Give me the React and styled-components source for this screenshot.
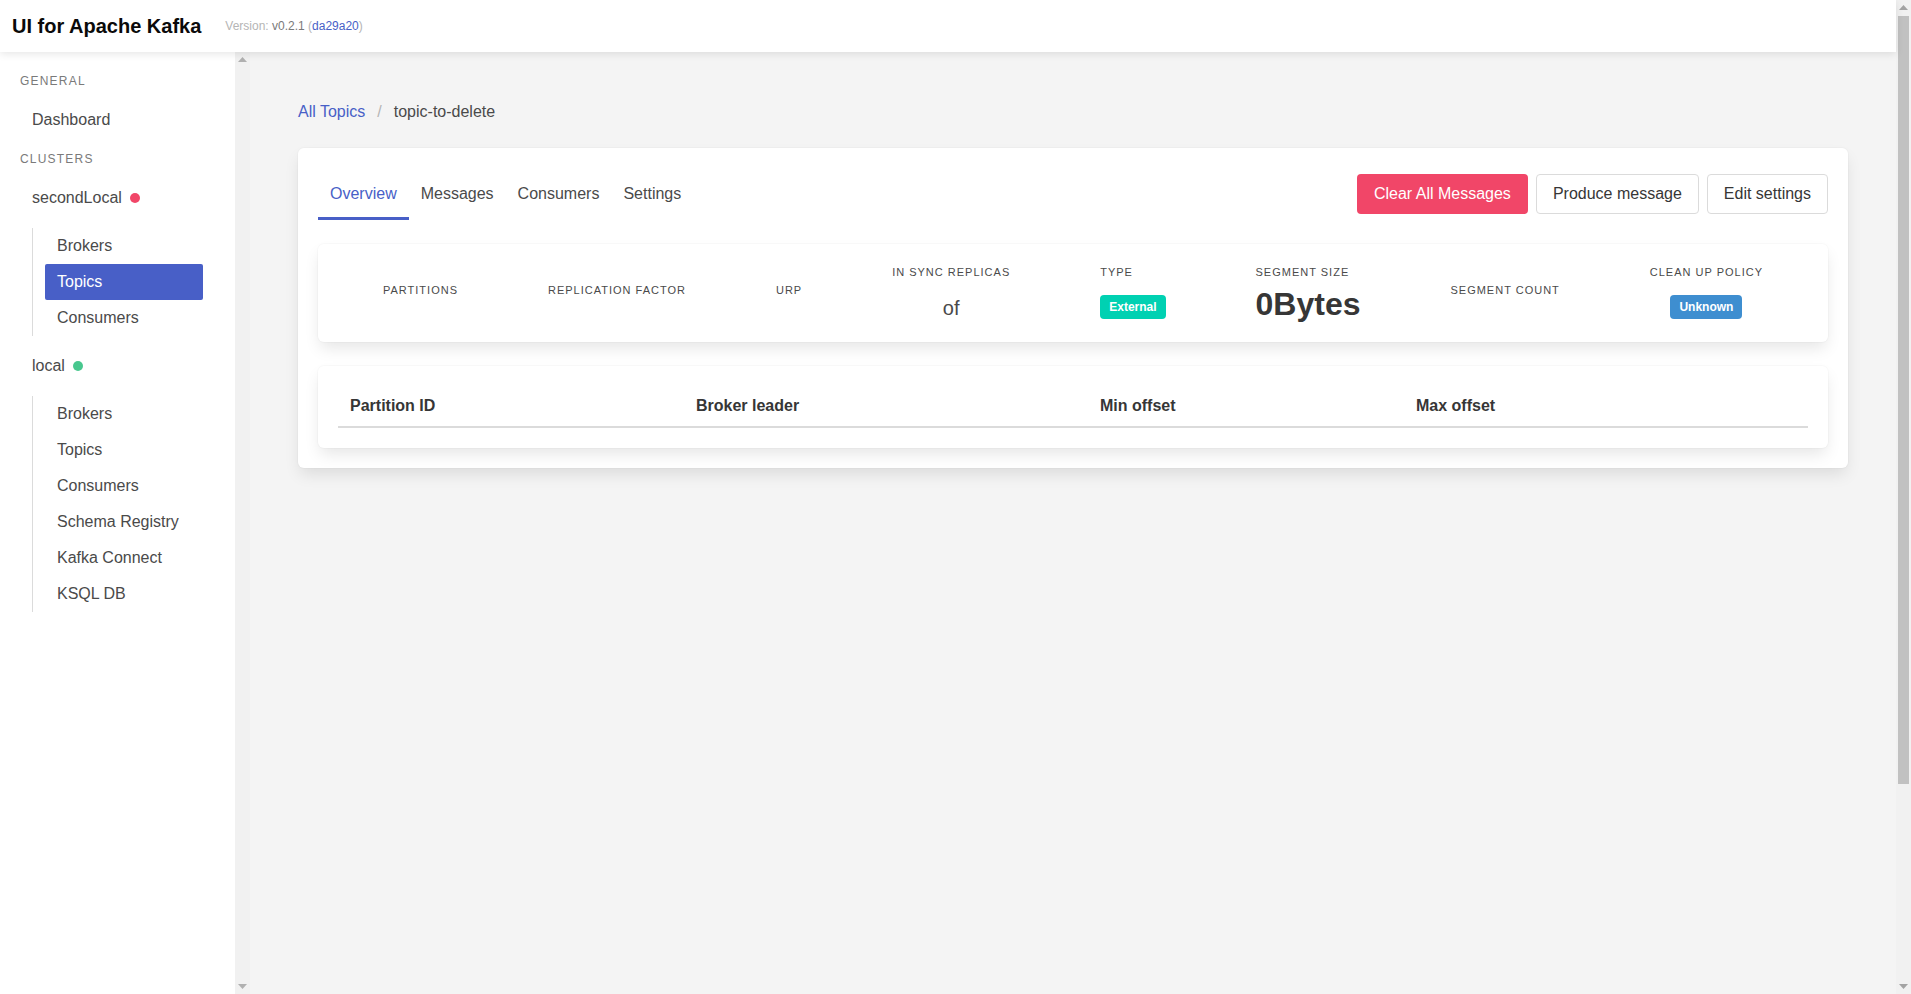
import React from "react";
import styled, { createGlobalStyle } from "styled-components";

const GlobalStyle = createGlobalStyle`
    * { box-sizing: border-box; }
    html, body { height: 100%; }
    body {
        margin: 0;
        overflow: hidden;
        font-family: "Liberation Sans", Arial, sans-serif;
        font-size: 16px;
        line-height: 1.5;
        color: #4a4a4a;
        background: #f4f4f4;
    }
    ul { list-style: none; margin: 0; padding: 0; }
    p { margin: 0; }
`;

const colors = {
    link: "#485fc7",
    danger: "#f14668",
    success: "#48c78e",
    primary: "#00d1b2",
    info: "#3e8ed0",
    text: "#4a4a4a",
    strong: "#363636",
    border: "#dbdbdb"
};

const Viewport = styled.div`
    display: flex;
    height: 100vh;
`;

const Page = styled.div`
    flex: 1;
    min-width: 0;
    display: flex;
    flex-direction: column;
`;

/* classic browser scrollbars, drawn since the page is a fixed frame */
const ScrollBar = styled.div`
    flex: none;
    width: 15px;
    display: flex;
    flex-direction: column;
    background: #f1f1f1;
`;

const ScrollArrow = styled.div`
    flex: none;
    height: 15px;
    display: flex;
    align-items: center;
    justify-content: center;
    margin-top: ${props => (props.down ? "auto" : "0")};
`;

const ScrollThumb = styled.div`
    flex: none;
    height: ${props => props.size}px;
    margin: 1px 2px 0;
    background: #c1c1c1;
`;

const Arrow = ({ down, color = "#a3a3a3" }) => (
    <ScrollArrow down={down}>
        <svg width="9" height="5" viewBox="0 0 9 5">
            <polygon
                points={down ? "0,0 9,0 4.5,5" : "0,5 9,5 4.5,0"}
                fill={color}
            />
        </svg>
    </ScrollArrow>
);

const Navbar = styled.nav`
    position: relative;
    z-index: 2;
    flex: none;
    height: 52px;
    display: flex;
    align-items: center;
    background: #fff;
    box-shadow: 0 2px 8px rgba(10, 10, 10, 0.1);
`;

const NavItem = styled.div`
    padding: 8px 12px;
    display: flex;
    align-items: center;
`;

const Brand = styled.span`
    font-size: 20px;
    font-weight: 700;
    color: #0a0a0a;
    line-height: 1.125;
`;

const Version = styled.span`
    font-size: 12px;
    color: #b5b5b5;

    b {
        font-weight: 400;
        color: #7a7a7a;
    }

    a {
        color: ${colors.link};
        text-decoration: none;
    }
`;

const Body = styled.div`
    flex: 1;
    min-height: 0;
    display: flex;
`;

const Sidebar = styled.aside`
    flex: none;
    width: 235px;
    background: #fff;
    padding: 20px;
`;

const MenuLabel = styled.p`
    font-size: 12px;
    letter-spacing: 0.1em;
    text-transform: uppercase;
    color: #7a7a7a;
    margin: ${props => (props.first ? "0 0 12px" : "12px 0")};
`;

const MenuLink = styled.a`
    display: flex;
    align-items: center;
    gap: 8px;
    padding: 8px 12px;
    line-height: 20px;
    border-radius: 2px;
    text-decoration: none;
    color: ${props => (props.active ? "#fff" : colors.text)};
    background: ${props => (props.active ? colors.link : "transparent")};
`;

const SubList = styled.ul`
    margin: 12px;
    padding-left: 12px;
    border-left: 1px solid ${colors.border};
`;

const StatusDot = styled.span`
    width: 10px;
    height: 10px;
    border-radius: 50%;
    background: ${props => (props.online ? colors.success : colors.danger)};
`;

const Main = styled.main`
    flex: 1;
    min-width: 0;
    padding: 48px;
    background: #f4f4f4;
`;

const Breadcrumb = styled.ul`
    display: flex;
    align-items: center;
    margin-bottom: 24px;
    line-height: 24px;

    li + li::before {
        content: "/";
        color: #b5b5b5;
    }

    a {
        color: ${colors.link};
        text-decoration: none;
        padding-right: 12px;
    }

    span {
        padding-left: 12px;
        color: ${colors.text};
    }
`;

const Box = styled.div`
    background: #fff;
    border-radius: 6px;
    padding: 20px;
    box-shadow: 0 8px 16px -2px rgba(10, 10, 10, 0.1),
        0 0 0 1px rgba(10, 10, 10, 0.02);
    margin-bottom: ${props => (props.last ? "0" : "24px")};
`;

const TopRow = styled.div`
    display: flex;
    align-items: center;
    justify-content: space-between;
    margin-bottom: 24px;
`;

const Tabs = styled.ul`
    display: flex;
`;

const Tab = styled.a`
    display: block;
    padding: 14px 12px 11px;
    line-height: 24px;
    text-decoration: none;
    color: ${props => (props.active ? colors.link : colors.text)};
    border-bottom: 3px solid
        ${props => (props.active ? colors.link : "transparent")};
`;

const Buttons = styled.div`
    display: flex;
    gap: 8px;
`;

const Button = styled.button`
    height: 40px;
    padding: 0 16px;
    font-family: inherit;
    font-size: 16px;
    line-height: 1.5;
    border-radius: 4px;
    cursor: pointer;
    border: 1px solid ${props => (props.danger ? "transparent" : colors.border)};
    background: ${props => (props.danger ? colors.danger : "#fff")};
    color: ${props => (props.danger ? "#fff" : colors.strong)};
`;

const Level = styled.div`
    display: flex;
    align-items: center;
    justify-content: space-between;
`;

const LevelItem = styled.div`
    flex: 1 0 auto;
    display: flex;
    justify-content: center;
    align-items: center;
`;

const Heading = styled.p`
    font-size: 11px;
    letter-spacing: 1px;
    text-transform: uppercase;
    margin-bottom: 5px;
`;

const Title = styled.p`
    font-size: 32px;
    font-weight: 700;
    line-height: 1.125;
    color: ${colors.strong};
    text-align: center;
`;

const Subtitle = styled.span`
    font-size: 20px;
    font-weight: 300;
    color: ${colors.text};
`;

const Tag = styled.span`
    display: inline-flex;
    align-items: center;
    height: 24px;
    padding: 0 9px;
    margin-top: 2px;
    font-size: 12px;
    line-height: 1.5;
    border-radius: 4px;
    vertical-align: middle;
    color: #fff;
    background: ${props => (props.info ? colors.info : colors.primary)};
`;

const Table = styled.table`
    width: 100%;
    border-collapse: collapse;

    th {
        text-align: left;
        padding: 8px 12px;
        color: ${colors.strong};
        font-weight: 700;
        border-bottom: 2px solid ${colors.border};
    }
`;

const Th = styled.th`
    width: ${props => props.w}px;
`;

const Indicator = ({ label, children }) => (
    <LevelItem>
        <div title={label}>
            <Heading>{label}</Heading>
            <Title>{children}</Title>
        </div>
    </LevelItem>
);

const secondLocalLinks = ["Brokers", "Topics", "Consumers"];
const localLinks = [
    "Brokers",
    "Topics",
    "Consumers",
    "Schema Registry",
    "Kafka Connect",
    "KSQL DB"
];

const columns = [
    { name: "Partition ID", w: 346 },
    { name: "Broker leader", w: 404 },
    { name: "Min offset", w: 316 },
    { name: "Max offset", w: 404 }
];

export default function App() {
    return (
        <Viewport>
            <GlobalStyle />
            <Page>
                <Navbar>
                    <NavItem>
                        <Brand>UI for Apache Kafka</Brand>
                    </NavItem>
                    <NavItem>
                        <Version>
                            Version: <b>v0.2.1</b> (<a href="#">da29a20</a>)
                        </Version>
                    </NavItem>
                </Navbar>

                <Body>
                    <Sidebar>
                        <MenuLabel first>General</MenuLabel>
                        <ul>
                            <li>
                                <MenuLink href="#">Dashboard</MenuLink>
                            </li>
                        </ul>
                        <MenuLabel>Clusters</MenuLabel>
                        <ul>
                            <li>
                                <MenuLink href="#">
                                    secondLocal <StatusDot />
                                </MenuLink>
                                <SubList>
                                    {secondLocalLinks.map(name => (
                                        <li key={name}>
                                            <MenuLink
                                                href="#"
                                                active={name === "Topics"}
                                            >
                                                {name}
                                            </MenuLink>
                                        </li>
                                    ))}
                                </SubList>
                            </li>
                            <li>
                                <MenuLink href="#">
                                    local <StatusDot online />
                                </MenuLink>
                                <SubList>
                                    {localLinks.map(name => (
                                        <li key={name}>
                                            <MenuLink href="#">{name}</MenuLink>
                                        </li>
                                    ))}
                                </SubList>
                            </li>
                        </ul>
                    </Sidebar>
                    <ScrollBar>
                        <Arrow color="#b0b0b0" />
                        <Arrow down color="#b0b0b0" />
                    </ScrollBar>

                    <Main>
                        <Breadcrumb>
                            <li>
                                <a href="#">All Topics</a>
                            </li>
                            <li>
                                <span>topic-to-delete</span>
                            </li>
                        </Breadcrumb>

                        <Box last>
                            <TopRow>
                                <Tabs>
                                    <li>
                                        <Tab href="#" active>
                                            Overview
                                        </Tab>
                                    </li>
                                    <li>
                                        <Tab href="#">Messages</Tab>
                                    </li>
                                    <li>
                                        <Tab href="#">Consumers</Tab>
                                    </li>
                                    <li>
                                        <Tab href="#">Settings</Tab>
                                    </li>
                                </Tabs>
                                <Buttons>
                                    <Button danger>Clear All Messages</Button>
                                    <Button>Produce message</Button>
                                    <Button>Edit settings</Button>
                                </Buttons>
                            </TopRow>

                            <Box>
                                <Level>
                                    <Indicator label="Partitions" />
                                    <Indicator label="Replication Factor" />
                                    <Indicator label="URP" />
                                    <Indicator label="In sync replicas">
                                        <Subtitle> of </Subtitle>
                                    </Indicator>
                                    <Indicator label="Type">
                                        <Tag>External</Tag>
                                    </Indicator>
                                    <Indicator label="Segment Size">
                                        0Bytes
                                    </Indicator>
                                    <Indicator label="Segment count" />
                                    <Indicator label="Clean Up Policy">
                                        <Tag info>Unknown</Tag>
                                    </Indicator>
                                </Level>
                            </Box>

                            <Box last>
                                <Table>
                                    <thead>
                                        <tr>
                                            {columns.map(col => (
                                                <Th key={col.name} w={col.w}>
                                                    {col.name}
                                                </Th>
                                            ))}
                                        </tr>
                                    </thead>
                                </Table>
                            </Box>
                        </Box>
                    </Main>
                </Body>
            </Page>
            <ScrollBar>
                <Arrow />
                <ScrollThumb size={768} />
                <Arrow down />
            </ScrollBar>
        </Viewport>
    );
}
